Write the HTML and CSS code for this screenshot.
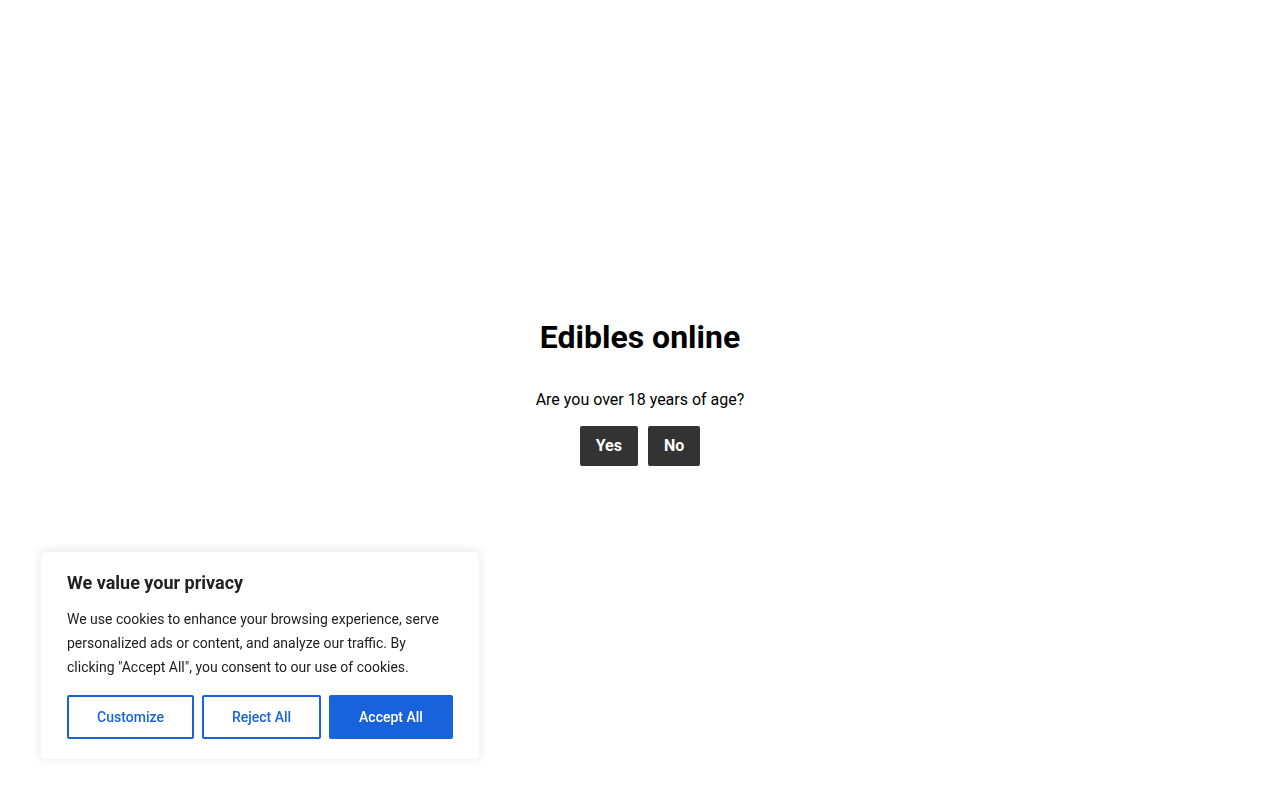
FILE: index.html
```html
<!DOCTYPE html>
<html lang="en">

<head>
  <meta charset="UTF-8">
  <meta name="viewport" content="width=device-width, initial-scale=1.0">
  <title>Edibles online</title>
  <link rel="stylesheet" href="styles.css">
</head>

<body>
  <main class="age-gate">
    <section class="age-box">
      <h1 class="age-title">Edibles online</h1>
      <p class="age-question">Are you over 18 years of age?</p>
      <div class="age-actions">
        <button class="age-btn">Yes</button>
        <button class="age-btn">No</button>
      </div>
    </section>
  </main>

  <aside class="cookie-bar">
    <h2 class="cookie-title">We value your privacy</h2>
    <p class="cookie-text">We use cookies to enhance your browsing experience, serve personalized ads or content, and analyze our traffic. By clicking "Accept All", you consent to our use of cookies.</p>
    <div class="cookie-actions">
      <button class="cookie-btn cookie-btn-outline cookie-customize">Customize</button>
      <button class="cookie-btn cookie-btn-outline cookie-reject">Reject All</button>
      <button class="cookie-btn cookie-btn-accept">Accept All</button>
    </div>
  </aside>
</body>

</html>
```

FILE: styles.css
```css
html {
  box-sizing: border-box;
  font-family: Roboto, "Liberation Sans", sans-serif;
  font-size: 16px;
}

*,
*::before,
*::after {
  box-sizing: inherit;
}

body {
  margin: 0;
  min-height: 100vh;
  background-color: #fff;
  color: #000;
}

button {
  font-family: inherit;
  cursor: pointer;
}

.age-gate {
  min-height: 100vh;
  display: flex;
  justify-content: center;
  align-items: center;
}

.age-box {
  text-align: center;
  margin-top: -16px;
}

.age-title {
  margin: 0 0 31px;
  font-size: 32px;
  font-weight: 700;
  line-height: 1.2;
}

.age-question {
  margin: 0 0 14px;
  font-size: 16px;
  line-height: 24px;
}

.age-actions {
  display: flex;
  justify-content: center;
  gap: 10px;
}

.age-btn {
  height: 40px;
  padding: 0 16px;
  border: 0;
  border-radius: 2px;
  background-color: #333;
  color: #fff;
  font-size: 16px;
  font-weight: 700;
}

.cookie-bar {
  position: fixed;
  left: 40px;
  bottom: 40px;
  width: 440px;
  padding: 21px 26px 20px;
  background-color: #fff;
  border: 1px solid #f4f4f4;
  border-radius: 6px;
  box-shadow: 0 -1px 10px 0 rgba(172, 171, 171, .3);
  color: #212121;
}

.cookie-title {
  margin: 0 0 14px;
  font-size: 18px;
  font-weight: 700;
  line-height: 20px;
}

.cookie-text {
  margin: 0 0 16px;
  font-size: 14px;
  line-height: 24px;
}

.cookie-actions {
  display: flex;
  gap: 8px;
}

.cookie-btn {
  height: 44px;
  border: 2px solid #1863dc;
  border-radius: 2px;
  font-size: 14px;
  font-weight: 500;
}

.cookie-btn-outline {
  background-color: #fff;
  color: #1863dc;
}

.cookie-customize {
  width: 127px;
}

.cookie-reject {
  width: 119px;
}

.cookie-btn-accept {
  width: 124px;
  background-color: #1863dc;
  color: #fff;
}
```
